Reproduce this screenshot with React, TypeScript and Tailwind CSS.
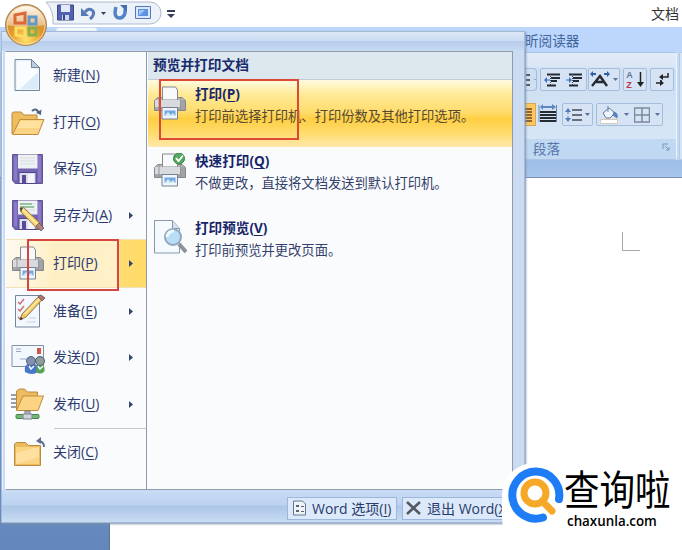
import type { ReactNode } from 'react';

type MenuItem = {
  label: string;
  hotkey: string;
  icon: ReactNode;
  arrow?: boolean;
  active?: boolean;
};

type PrintItem = {
  label: string;
  hotkey: string;
  desc: string;
  icon: ReactNode;
  active?: boolean;
};

function Icon({ children }: { children: ReactNode }) {
  return (
    <svg width="34" height="34" viewBox="0 0 34 34" fill="none" className="shrink-0">
      {children}
    </svg>
  );
}

function NewIcon() {
  return (
    <Icon>
      <path d="M4 1.5h16.500l8 8V32.500H4z" fill="#edf4fc" stroke="#74879f" />
      <path d="M6 3.500h13v7h8V31H6z" fill="#fafdff" />
      <path d="M9 31L27 14v17z" fill="#dcebf8" />
      <path d="M20.500 1.500v8h8z" fill="#b9cce2" stroke="#74879f" />
    </Icon>
  );
}

function OpenIcon() {
  return (
    <Icon>
      <path d="M1 29V9q0-2 2-2h7l3 3h13v5" fill="#eebc5c" stroke="#b98a42" />
      <path d="M1.500 29.500L9 14.500h24L27 29.500z" fill="#fbd483" stroke="#bf8c3d" strokeLinejoin="round" />
      <path d="M9.500 16H31l-3 7H6z" fill="#ffe2a0" />
      <path d="M21 6q4-4 7 2" stroke="#52657f" strokeWidth="2" />
      <path d="M25 8l5 2 .5-5.500z" fill="#52657f" />
    </Icon>
  );
}

function Floppy() {
  return (
    <>
      <path d="M1.500 2.500h30v29H4l-2.500-3z" fill="#7563b4" stroke="#615494" />
      <path d="M3 4h3v24H3zM27 4h3v26h-3z" fill="#8a79c6" />
      <path d="M7 2.500h19.500v14H7z" fill="#eef1f4" />
      <path d="M9 6h15M9 9h15M9 12h15" stroke="#d6dde0" />
      <path d="M8 20.500h17v11H8z" fill="#dcdff0" stroke="#51458c" />
      <path d="M11 23h4v8h-4z" fill="#594a98" />
      <path d="M17 22h6v9h-6z" fill="#f5f6fc" />
    </>
  );
}

function Pencil() {
  return (
    <>
      <path d="M9 10l3-1 19 18-4 4.500L10 14z" fill="#f6d06e" stroke="#876331" strokeWidth=".8" />
      <path d="M11 11l17 17" stroke="#fff0a8" strokeWidth="1.500" />
      <path d="M9 10l1 4 2-4z" fill="#4a4a43" />
      <path d="M28 25l5 5-3 3-5-5z" fill="#ac8585" stroke="#6b5554" strokeWidth=".8" />
    </>
  );
}

function SaveAsIcon() {
  return (
    <Icon>
      <Floppy />
      <path d="M9 6h12M9 9h14" stroke="#80b889" strokeWidth="1.500" />
      <Pencil />
    </Icon>
  );
}

function Printer() {
  return (
    <>
      <path d="M5 11.500h24l3.500 3v10H1.500v-10z" fill="#b9babe" stroke="#85878b" />
      <path d="M9.500 1h13l2 3v10h-15z" fill="#f7f9fb" stroke="#85888d" />
      <path d="M2 14h30v7H2z" fill="#d9dadd" />
      <path d="M2 21h30v3H2z" fill="#a5a7ab" />
      <path d="M6 12v12M27.500 12v12" stroke="#94969a" />
      <path d="M28 14h4v10h-4z" fill="#a2a3a7" />
      <path d="M9 21.500h15.500v11.500H9z" fill="#edf5ff" stroke="#77808c" />
      <path d="M11.500 24.500h11v5.500h-11z" fill="#73a9dd" />
      <path d="M11.500 30l3.500-4 3 3 2-2 2.500 3z" fill="#d7e9f6" />
    </>
  );
}

function QuickPrintIcon() {
  return (
    <Icon>
      <Printer />
      <circle cx="26" cy="5.500" r="5.500" fill="#56a860" stroke="#33803e" />
      <path d="M23 5l2.500 3L30 2.500" stroke="#fff" strokeWidth="1.800" />
    </Icon>
  );
}

function PreviewIcon() {
  return (
    <Icon>
      <path d="M1.500 .5h18l7 8v24.500h-25z" fill="#f5faff" stroke="#8799ad" />
      <path d="M19.500 .5v8h7" fill="#d4e0ed" stroke="#8799ad" />
      <path d="M26 24l7 8" stroke="#8d929a" strokeWidth="4" />
      <circle cx="20" cy="17" r="8" fill="#b9dcf7" stroke="#93a6bc" strokeWidth="2" />
      <path d="M14 17q1-6 7-6" stroke="#edf9ff" strokeWidth="3" />
    </Icon>
  );
}

function PrepareIcon() {
  return (
    <Icon>
      <path d="M4.500 1.500h24v31.500h-24z" fill="#f3f8fe" stroke="#74879f" />
      <path d="M7 8l2 2 4-5M7 15l2 2 4-5M7 23l2 2 4-5" stroke="#d06d71" strokeWidth="1.500" />
      <path d="M16 28h9M18 24h7" stroke="#c4d1df" />
      <path d="M11 20L29 1l4 3-18 19-6 3z" fill="#f0c86b" stroke="#876331" strokeWidth=".8" />
      <path d="M14 20L29 4" stroke="#fff0a8" strokeWidth="1.500" />
      <path d="M27 3l3-2 4 3-3 3z" fill="#ac7474" stroke="#6b5554" strokeWidth=".8" />
      <path d="M10 23l-1 3 3-1z" fill="#333" />
    </Icon>
  );
}

function SendIcon() {
  return (
    <Icon>
      <path d="M1 4.500h31.500v21H1z" fill="#f3f8fe" stroke="#8391a5" />
      <path d="M5 8h5M5 10.500h5M9 18h10" stroke="#9aabc0" />
      <path d="M26 7h4v6h-4z" fill="#d35546" />
      <path d="M14 31q-1-7 3-8h7q4 2 3 8-6 4-13 0z" fill="#4675c9" />
      <path d="M26 23h5q4 3 2 8-4 3-8 0z" fill="#55a255" />
      <circle cx="20" cy="20" r="4.500" fill="#8191b0" stroke="#53617f" />
      <circle cx="29" cy="20" r="4.500" fill="#8b9b9f" stroke="#4f625d" />
      <path d="M18 25l2 3 3-3M27 25l2 3 3-3" stroke="#eef5fe" strokeWidth="1.500" />
    </Icon>
  );
}

function PublishIcon() {
  return (
    <Icon>
      <path d="M0 8h6M0 12h6M0 16h6M0 20h6" stroke="#7a818d" strokeWidth="1.500" />
      <path d="M5.500 23V4l3-2h5l3 3h10v5" fill="#edbb5e" stroke="#b98a42" />
      <path d="M5.500 23.500L12 9h20.500L27 23.500z" fill="#fbd483" stroke="#bf8c3d" />
      <path d="M14 24h5v5h-5z" fill="#b4b8bd" stroke="#777f87" />
      <rect x="5" y="27.500" width="23" height="4" rx="1" fill="#75b875" stroke="#428453" />
      <path d="M12 27h9v5h-9z" fill="#d1d6dc" stroke="#7b828d" />
    </Icon>
  );
}

function CloseIcon() {
  return (
    <Icon>
      <path d="M3.500 30.500V9l2-1.500h9l3 3h12v20z" fill="#edbb5e" stroke="#b98a42" />
      <path d="M5 12h23v17H5z" fill="#fbd483" />
      <path d="M5 18l23-6v10L5 29z" fill="#ffe0a0" />
      <path d="M33 12q0-6-6-6" stroke="#5e7089" strokeWidth="2" />
      <path d="M25 6l5-4v7z" fill="#5e7089" />
    </Icon>
  );
}

const menuItems: MenuItem[] = [
  { label: '新建', hotkey: 'N', icon: <NewIcon /> },
  { label: '打开', hotkey: 'O', icon: <OpenIcon /> },
  { label: '保存', hotkey: 'S', icon: <Icon><Floppy /></Icon> },
  { label: '另存为', hotkey: 'A', icon: <SaveAsIcon />, arrow: true },
  { label: '打印', hotkey: 'P', icon: <Icon><Printer /></Icon>, arrow: true, active: true },
  { label: '准备', hotkey: 'E', icon: <PrepareIcon />, arrow: true },
  { label: '发送', hotkey: 'D', icon: <SendIcon />, arrow: true },
  { label: '发布', hotkey: 'U', icon: <PublishIcon />, arrow: true },
];

const printItems: PrintItem[] = [
  {
    label: '打印',
    hotkey: 'P',
    desc: '打印前选择打印机、打印份数及其他打印选项。',
    icon: <Icon><Printer /></Icon>,
    active: true,
  },
  { label: '快速打印', hotkey: 'Q', desc: '不做更改，直接将文档发送到默认打印机。', icon: <QuickPrintIcon /> },
  { label: '打印预览', hotkey: 'V', desc: '打印前预览并更改页面。', icon: <PreviewIcon /> },
];

function Label({ text, hotkey }: { text: string; hotkey: string }) {
  return (
    <span className="whitespace-nowrap">
      {text}(<span className="underline decoration-1 underline-offset-2">{hotkey}</span>)
    </span>
  );
}

function MenuRow({ item }: { item: MenuItem }) {
  return (
    <div
      className={`flex items-center pl-[5px] pr-[13px] ${
        item.active
          ? 'h-[49px] border-y border-[#f0e2b4] bg-[linear-gradient(90deg,#fffaf0_0%,#ffefc4_35%,#fff0c8_79%,#ffdc70_82%,#ffda67_100%)]'
          : 'h-[46.7px]'
      }`}
    >
      {item.icon}
      <span className="ml-2 flex-1 pb-0.5 text-[14px] text-[#2c3a70]">
        <Label text={item.label} hotkey={item.hotkey} />
      </span>
      {item.arrow && (
        <svg width="4" height="7" viewBox="0 0 4 7"><path d="M0 0l4 3.500L0 7z" fill="#35466e" /></svg>
      )}
    </div>
  );
}

function PrintRow({ item }: { item: PrintItem }) {
  return (
    <div
      className={`flex h-[67px] pl-[5px] pt-1.5 ${
        item.active
          ? 'bg-[linear-gradient(180deg,#fffbe0_0%,#ffe996_22%,#ffdc6c_48%,#ffcf43_58%,#ffdc6f_80%,#ffe9ac_100%)]'
          : ''
      }`}
    >
      {item.icon}
      <div className="ml-2 whitespace-nowrap leading-[18px]">
        <div className="-mt-px text-[13.6px] font-bold text-[#17266a]">
          <Label text={item.label} hotkey={item.hotkey} />
        </div>
        <div className={`mt-[4px] text-[13.3px] ${item.active ? 'text-[#57482f]' : 'text-[#34416c]'}`}>{item.desc}</div>
      </div>
    </div>
  );
}

function OfficeButton() {
  return (
    <svg width="44" height="44" viewBox="0 0 44 44" className="absolute left-1 top-[3px]">
      <defs>
        <radialGradient id="orb" cx="50%" cy="85%" r="75%">
          <stop offset="0" stopColor="#ffe16a" />
          <stop offset=".55" stopColor="#e29428" />
          <stop offset="1" stopColor="#c99350" />
        </radialGradient>
        <linearGradient id="shine" x1="0" y1="0" x2="0" y2="1">
          <stop offset="0" stopColor="#fffaf0" />
          <stop offset="1" stopColor="#e8b67c" />
        </linearGradient>
      </defs>
      <circle cx="22" cy="22" r="20.500" fill="url(#orb)" stroke="#a9855c" />
      <path d="M3 22a19 19 0 0 1 38 0q-19 4-38 0z" fill="url(#shine)" />
      <circle cx="22" cy="22" r="19" fill="none" stroke="#fff0c8" strokeOpacity=".7" />
      <g fill="none" strokeWidth="3">
        <path d="M11 20v-8l10-2v10z" stroke="#dc6837" />
        <path d="M25 14h7v7h-7z" stroke="#609ac8" />
        <path d="M12 25h9v9l-9-2z" stroke="#ffdc62" />
        <path d="M25 25h7v7h-7z" stroke="#88af4a" />
      </g>
    </svg>
  );
}

function QuickAccess() {
  return (
    <div className="flex items-start pl-[45px] pt-px">
      <svg width="117" height="24" viewBox="0 0 117 24" fill="none">
        <path d="M1 1h104a11 11 0 0 1 0 22H8Q9 9 1 1z" fill="#edf2f9" stroke="#aebbd0" />
        <path d="M12.500 4h16v15h-16z" fill="#5361b2" stroke="#3f4684" />
        <path d="M16 4h9v7h-9z" fill="#e4eafa" />
        <path d="M17 14h7v5h-7z" fill="#cbd5ef" />
        <path d="M18 14h2v5h-2z" fill="#38478c" />
        <path d="M40 11q4-5 8-1 2 4-3 8" stroke="#557bb9" strokeWidth="3" />
        <path d="M36 7v8h8z" fill="#557bb9" />
        <path d="M56 11h5l-2.500 3z" fill="#31435e" />
        <path d="M71 6q-3 11 4 11 6-1 5-9" stroke="#5584c6" strokeWidth="3.500" />
        <path d="M75 4h7v7z" fill="#416fb2" />
        <path d="M90.500 5.500h15v12h-15z" fill="#d8e8ff" stroke="#5978b0" />
        <path d="M93 8h10v7H93z" fill="#5f91e0" />
        <path d="M94 9h6l-5 5h-1z" fill="#9fc4fa" />
      </svg>
      <svg width="8" height="8" viewBox="0 0 8 8" className="ml-[5px] mt-[9px]">
        <path d="M0 0h8v2H0zM0 4h8L4 8z" fill="#354157" />
      </svg>
    </div>
  );
}

const toolGroup = 'flex items-center justify-around rounded-[2px] border border-[#a4bddd] bg-[#d5e3f4]';

function DropArrow() {
  return <svg width="5" height="3" viewBox="0 0 5 3"><path d="M0 0h5L2.500 3z" fill="#58719c" /></svg>;
}

function Indent({ right }: { right?: boolean }) {
  return (
    <svg width="17" height="14" viewBox="0 0 17 14">
      <path d="M3 1.500h13M7 5h9M7 8h6M3 12.500h9" stroke="#252b35" strokeWidth="2" />
      <path d={right ? 'M0 6.500h3V4l3 3-3 3V7.500H0z' : 'M6 6.500H3V4L0 7l3 3V7.500h3z'} fill="#3c6fbd" />
      <path d="M6.500 1v12" stroke="#3c4a60" strokeDasharray="1 1" />
    </svg>
  );
}

function RibbonTools() {
  return (
    <div className="flex flex-col pl-[524px] pt-[15px]">
      <div className="flex h-[23px]">
        <div className="flex w-3 items-center gap-1 rounded-r border border-l-0 border-[#a4bddd] pl-px">
          <svg width="4" height="12" viewBox="0 0 4 12" className="shrink-0"><path d="M0 1h4M0 6h4M0 11h4" stroke="#333" strokeWidth="1.500" /></svg>
          <DropArrow />
        </div>
        <div className={`${toolGroup} ml-[3px] w-[47px]`}><Indent /><Indent right /></div>
        <div className={`${toolGroup} ml-px w-[32px]`}>
          <svg width="20" height="17" viewBox="0 0 20 17">
            <path d="M2 15L10 5l7 10M6 11h8" fill="none" stroke="#252a33" strokeWidth="2.400" />
            <path d="M0 3l3-3v2h3v2H3v2zM20 3l-3-3v2h-3v2h3v2z" fill="#315fa6" />
          </svg>
          <DropArrow />
        </div>
        <div className={`${toolGroup} ml-[3px] w-[24px]`}>
          <span className="flex flex-col font-['Liberation_Sans'] text-[9px] font-bold leading-[10px]">
            <span className="text-[#5a779f]">A</span>
            <span className="text-[#b8324a]">Z</span>
          </span>
          <svg width="7" height="16" viewBox="0 0 7 16"><path d="M3.500 0v12" stroke="#222" strokeWidth="1.500" /><path d="M0 10h7l-3.500 5z" fill="#222" /></svg>
        </div>
        <div className={`${toolGroup} ml-[3px] w-[24px]`}>
          <svg width="14" height="15" viewBox="0 0 14 15">
            <path d="M13 1v4H6M1 11h5V8" fill="none" stroke="#222" strokeWidth="1.500" />
            <path d="M8 2v6L4 5zM5 8v6l4-3z" fill="#222" />
          </svg>
        </div>
      </div>
      <div className="mt-3 flex h-[23px]">
        <div className="flex w-[11px] items-center border border-l-0 border-[#d6a852] bg-[#ffc75e]">
          <svg width="8" height="14" viewBox="0 0 8 14"><path d="M0 1h7M0 4h7M0 7h7M0 10h7M0 13h7" stroke="#6a4626" strokeWidth="1.600" /></svg>
        </div>
        <svg width="20" height="20" viewBox="0 0 20 20" className="ml-0.5">
          <path d="M1 2v17M18.500 2v17" stroke="#6884ac" />
          <path d="M2 4l3-3v2h9V1l4 3-4 3V5H5v2z" fill="#5b86c6" />
          <path d="M2 9h16M2 12h16M2 15h16M2 18h16" stroke="#252b35" strokeWidth="1.800" />
        </svg>
        <div className={`${toolGroup} ml-1 w-[31px]`}>
          <svg width="17" height="16" viewBox="0 0 17 16">
            <path d="M7 3h10M7 8h10M7 13h10" stroke="#444b56" strokeWidth="1.600" />
            <path d="M3 1l3 4H0zM3 15l3-4H0zM2.500 5v2h1V5zM2.500 9v2h1V9z" fill="#4e7dbc" />
          </svg>
          <DropArrow />
        </div>
        <div className={`${toolGroup} ml-[3px] w-[67px]`}>
          <svg width="19" height="18" viewBox="0 0 19 18">
            <path d="M3 7l6-5 6 5-5 5H6z" fill="#eef5fc" stroke="#667a98" />
            <path d="M8 6V0M14 6q4 1 3 6l-4-3z" fill="#5982bc" stroke="#5982bc" />
            <path d="M.5 13.500h17v4H.5z" fill="#fff" stroke="#d4c9b5" />
          </svg>
          <DropArrow />
          <svg width="16" height="16" viewBox="0 0 16 16"><path d="M.5 1h15v14H.5zM8 1v14M.5 8h15" fill="none" stroke="#7b8b9f" strokeWidth="1.500" /></svg>
          <DropArrow />
        </div>
      </div>
    </div>
  );
}

function FileMenu() {
  return (
    <div className="absolute left-px top-[31px] flex h-[492px] w-[524px] flex-col border border-[#a4b9d7] bg-[#cbdcf2] pl-[3px] pr-[11px] shadow-[inset_1px_1px_#e9f2fd,1px_1px_2px_#7f91aa]">
      <div className="-ml-[3px] -mr-[11px] h-[19px] shrink-0 bg-[linear-gradient(180deg,#dce8f8_0%,#cbdcf2_45%,#b8cdea_50%,#c7daf3_100%)]" />
      <div className="flex h-[439px] shrink-0 border border-[#929bab] border-l-[#f8fbff] bg-[#fafbfc]">
        <div className="w-[140px] shrink-0">
          {menuItems.map((item) => (
            <MenuRow key={item.label} item={item} />
          ))}
          <div className="ml-12 h-px bg-[#c8c9cb]" />
          <MenuRow item={{ label: '关闭', hotkey: 'C', icon: <CloseIcon /> }} />
        </div>
        <div className="flex-1 border-l border-[#8e99a9] pl-px">
          <div className="flex h-[28px] items-center border-b border-[#c2ccd4] bg-[#dde7ee] pl-[5px] text-[13.7px] font-bold text-[#182b6c]">预览并打印文档</div>
          {printItems.map((item) => (
            <PrintRow key={item.label} item={item} />
          ))}
        </div>
      </div>
      <div className="-ml-[3px] -mr-[11px] flex flex-1 items-center bg-[linear-gradient(180deg,#c8dcf5_0%,#bdd2ef_47%,#adc6e7_50%,#c8dcf3_100%)] pl-[285px] pt-1 text-[14px] text-[#293b6b]">
        <div className="flex h-[23px] w-[110px] items-center border border-[#9bb8dc] bg-[#dbe9fa] pl-[5px]">
          <svg width="13" height="16" viewBox="0 0 13 16" className="mr-[6px] shrink-0">
            <path d="M.5 1h9l3 3v11H.5z" fill="#eef3f8" stroke="#66788f" />
            <path d="M3 5h3v2H3zM3 10h3v2H3zM8 6h3v1H8zM8 11h3v1H8z" fill="#5c6472" />
          </svg>
          <Label text="Word 选项" hotkey="I" />
        </div>
        <div className="ml-[5px] flex h-[23px] w-[116px] items-center border border-[#9bb8dc] bg-[#dbe9fa] pl-[3px]">
          <svg width="15" height="14" viewBox="0 0 15 14" className="mr-1.5 shrink-0"><path d="M1 1l13 12M14 1L1 13" stroke="#555961" strokeWidth="2.600" /></svg>
          <Label text="退出 Word" hotkey="X" />
        </div>
      </div>
    </div>
  );
}

function SiteBadge() {
  return (
    <div className="absolute left-[502px] top-[463px] flex h-[87px] w-[180px] rounded-l-[32px] bg-white pl-1.5 pt-1">
      <svg width="56" height="56" viewBox="0 0 56 56" fill="none" className="shrink-0">
        <path d="M51 32A23.500 23.500 0 1 0 35 50.500" stroke="#1f7cf7" strokeWidth="8" strokeLinecap="round" />
        <circle cx="27" cy="26" r="11" stroke="#f6a828" strokeWidth="7" />
        <path d="M34 34l10 10" stroke="#f6a828" strokeWidth="7" strokeLinecap="round" />
      </svg>
      <div className="whitespace-nowrap text-black">
        <div className="mt-0.5 h-[40px] origin-left scale-y-115 text-[35.500px] leading-[40px]">查询啦</div>
        <div className="ml-[3px] mt-0.5 origin-left scale-x-[.89] text-[15px] font-semibold leading-[18px]">chaxunla.com</div>
      </div>
    </div>
  );
}

export default function App() {
  return (
    <div className="relative flex h-[550px] w-[682px] flex-col overflow-hidden bg-white font-['Open_Sans','Noto_Sans_CJK_SC',sans-serif]">
      <header className="flex h-[27px] shrink-0 justify-between">
        <QuickAccess />
        <span className="pr-[3px] pt-1 text-[14px] leading-5 text-[#333]">文档</span>
      </header>
      <div className="flex h-[25px] shrink-0 bg-[#bcd7fb] pl-[55px]">
        <div className="h-4 w-[43px] rounded-t border border-[#c7d9ee] bg-[#f5f9fe]" />
        <span className="ml-[427px] text-[13.6px] leading-[27px] text-[#41659e]">昕阅读器</span>
      </div>
      <div className="flex h-[108px] shrink-0 bg-[#c3d8f1]">
        <div className="flex w-[677px] shrink-0 flex-col rounded-br border border-[#a9c4e5] border-r-[#edf6ff] bg-[linear-gradient(180deg,#e2ebf7_0%,#dbe7f5_12%,#ccdef2_16%,#dae8f7_100%)]">
          <RibbonTools />
          <div className="mt-auto flex h-5 items-center justify-between bg-[#c0d8f1] pl-[532px] pr-[6px] text-[13.5px] text-[#5475aa]">
            段落
            <svg width="8" height="8" viewBox="0 0 8 8" className="mb-1"><path d="M1 6V1h5M3 3l4 4M7 4v3H4" fill="none" stroke="#7895bd" /></svg>
          </div>
        </div>
        <div className="ml-0.5 flex-1 border border-r-0 border-[#b5cce8] bg-[#d5e4f5]" />
      </div>
      <div className="h-[18px] shrink-0 border-b border-[#7892b8] bg-[linear-gradient(180deg,#9dbde7,#a9c6ec)]" />
      <main className="flex flex-1">
        <div className="w-[110px] border-r border-[#597295] bg-[linear-gradient(180deg,#8aaad8,#6387bc)]" />
        <div className="ml-[512px] mt-[54px] h-[19px] w-[18px] border-b border-l border-[#aaa]" />
      </main>
      <FileMenu />
      <OfficeButton />
      <div className="absolute left-[27px] top-[239px] h-[52px] w-[92px] border-2 border-[#d6453e]" />
      <div className="absolute left-[159px] top-[79px] h-[61px] w-[140px] border-2 border-[#dc4939]" />
      <SiteBadge />
    </div>
  );
}
